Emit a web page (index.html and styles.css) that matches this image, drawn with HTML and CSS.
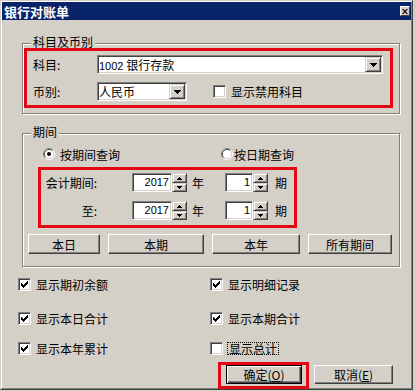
FILE: index.html
```html
<!DOCTYPE html>
<html lang="zh-CN">
<head>
    <meta charset="UTF-8">
    <title>银行对账单</title>
    <link rel="stylesheet" href="styles.css">
</head>
<body>
<div class="window">
    <div class="frame">
        <div class="titlebar">
            <span class="title">银行对账单</span>
            <span class="close">
                <svg width="6" height="5" viewBox="0 0 6 5"><path d="M0 0h1.5l1.5 1.7 1.5-1.7H6L3.8 2.5 6 5H4.5L3 3.3 1.5 5H0l2.2-2.5z" fill="#000"/></svg>
            </span>
        </div>

        <!-- 科目及币别 -->
        <div class="group group-subject">
            <div class="group-title">科目及币别</div>
            <div class="mark mark-subject">
                <div class="field-row">
                    <span class="field-label">科目:</span>
                    <div class="combo combo-wide">
                        <span class="combo-text"><span class="num">1002</span> 银行存款</span>
                        <span class="drop"><svg width="7" height="4" viewBox="0 0 7 4"><path d="M0 0H7V1H6V2H5V3H4V4H3V3H2V2H1V1H0Z"/></svg></span>
                    </div>
                </div>
                <div class="field-row field-row-next">
                    <span class="field-label">币别:</span>
                    <div class="combo combo-short">
                        <span class="combo-text">人民币</span>
                        <span class="drop"><svg width="7" height="4" viewBox="0 0 7 4"><path d="M0 0H7V1H6V2H5V3H4V4H3V3H2V2H1V1H0Z"/></svg></span>
                    </div>
                    <span class="check check-disabled"></span>
                    <span class="check-label">显示禁用科目</span>
                </div>
            </div>
        </div>

        <!-- 期间 -->
        <div class="group group-period">
            <div class="group-title">期间</div>
            <div class="radio-row">
                <span class="radio radio-first">
                    <svg width="12" height="12" viewBox="0 0 12 12">
                        <path d="M2.11 9.89A5.5 5.5 0 0 1 9.89 2.11" fill="none" stroke="#808080"/>
                        <path d="M9.89 2.11A5.5 5.5 0 0 1 2.11 9.89" fill="none" stroke="#fff"/>
                        <path d="M2.82 9.18A4.5 4.5 0 0 1 9.18 2.82" fill="none" stroke="#404040"/>
                        <path d="M9.18 2.82A4.5 4.5 0 0 1 2.82 9.18" fill="none" stroke="#d4d0c8"/>
                        <circle cx="6" cy="6" r="4" fill="#fff"/>
                        <circle cx="6" cy="6" r="2" fill="#000"/>
                    </svg>
                </span>
                <span class="radio-label">按期间查询</span>
                <span class="radio radio-second">
                    <svg width="12" height="12" viewBox="0 0 12 12">
                        <path d="M2.11 9.89A5.5 5.5 0 0 1 9.89 2.11" fill="none" stroke="#808080"/>
                        <path d="M9.89 2.11A5.5 5.5 0 0 1 2.11 9.89" fill="none" stroke="#fff"/>
                        <path d="M2.82 9.18A4.5 4.5 0 0 1 9.18 2.82" fill="none" stroke="#404040"/>
                        <path d="M9.18 2.82A4.5 4.5 0 0 1 2.82 9.18" fill="none" stroke="#d4d0c8"/>
                        <circle cx="6" cy="6" r="4" fill="#fff"/>
                    </svg>
                </span>
                <span class="radio-label radio-label-second">按日期查询</span>
            </div>

            <div class="mark mark-period">
                <div class="field-row">
                    <span class="period-label">会计期间:</span>
                    <span class="edit edit-year num">2017</span>
                    <span class="spin">
                        <span class="spin-btn spin-up"><svg width="5" height="3" viewBox="0 0 5 3"><path d="M2 0H3V1H4V2H5V3H0V2H1V1H2Z"/></svg></span>
                        <span class="spin-btn spin-down"><svg width="5" height="3" viewBox="0 0 5 3"><path d="M0 0H5V1H4V2H3V3H2V2H1V1H0Z"/></svg></span>
                    </span>
                    <span class="unit-year">年</span>
                    <span class="edit edit-period num">1</span>
                    <span class="spin">
                        <span class="spin-btn spin-up"><svg width="5" height="3" viewBox="0 0 5 3"><path d="M2 0H3V1H4V2H5V3H0V2H1V1H2Z"/></svg></span>
                        <span class="spin-btn spin-down"><svg width="5" height="3" viewBox="0 0 5 3"><path d="M0 0H5V1H4V2H3V3H2V2H1V1H0Z"/></svg></span>
                    </span>
                    <span class="unit-period">期</span>
                </div>
                <div class="field-row field-row-period">
                    <span class="period-label">至:</span>
                    <span class="edit edit-year num">2017</span>
                    <span class="spin">
                        <span class="spin-btn spin-up"><svg width="5" height="3" viewBox="0 0 5 3"><path d="M2 0H3V1H4V2H5V3H0V2H1V1H2Z"/></svg></span>
                        <span class="spin-btn spin-down"><svg width="5" height="3" viewBox="0 0 5 3"><path d="M0 0H5V1H4V2H3V3H2V2H1V1H0Z"/></svg></span>
                    </span>
                    <span class="unit-year">年</span>
                    <span class="edit edit-period num">1</span>
                    <span class="spin">
                        <span class="spin-btn spin-up"><svg width="5" height="3" viewBox="0 0 5 3"><path d="M2 0H3V1H4V2H5V3H0V2H1V1H2Z"/></svg></span>
                        <span class="spin-btn spin-down"><svg width="5" height="3" viewBox="0 0 5 3"><path d="M0 0H5V1H4V2H3V3H2V2H1V1H0Z"/></svg></span>
                    </span>
                    <span class="unit-period">期</span>
                </div>
            </div>

            <div class="quick-row">
                <span class="btn btn-day">本日</span>
                <span class="btn btn-period">本期</span>
                <span class="btn btn-year">本年</span>
                <span class="btn btn-all">所有期间</span>
            </div>
        </div>

        <!-- 显示选项 -->
        <div class="options">
            <div class="opt">
                <span class="check"><svg width="7" height="7" viewBox="0 0 7 7"><path d="M6 0h1v1h-1zM5 1h2v1h-2zM0 2h1v1h-1zM4 2h3v1h-3zM0 3h2v1h-2zM3 3h3v1h-3zM0 4h5v1h-5zM1 5h3v1h-3zM2 6h1v1h-1z"/></svg></span>
                <span class="opt-label">显示期初余额</span>
            </div>
            <div class="opt">
                <span class="check"><svg width="7" height="7" viewBox="0 0 7 7"><path d="M6 0h1v1h-1zM5 1h2v1h-2zM0 2h1v1h-1zM4 2h3v1h-3zM0 3h2v1h-2zM3 3h3v1h-3zM0 4h5v1h-5zM1 5h3v1h-3zM2 6h1v1h-1z"/></svg></span>
                <span class="opt-label">显示明细记录</span>
            </div>
            <div class="opt">
                <span class="check"><svg width="7" height="7" viewBox="0 0 7 7"><path d="M6 0h1v1h-1zM5 1h2v1h-2zM0 2h1v1h-1zM4 2h3v1h-3zM0 3h2v1h-2zM3 3h3v1h-3zM0 4h5v1h-5zM1 5h3v1h-3zM2 6h1v1h-1z"/></svg></span>
                <span class="opt-label">显示本日合计</span>
            </div>
            <div class="opt">
                <span class="check"><svg width="7" height="7" viewBox="0 0 7 7"><path d="M6 0h1v1h-1zM5 1h2v1h-2zM0 2h1v1h-1zM4 2h3v1h-3zM0 3h2v1h-2zM3 3h3v1h-3zM0 4h5v1h-5zM1 5h3v1h-3zM2 6h1v1h-1z"/></svg></span>
                <span class="opt-label">显示本期合计</span>
            </div>
            <div class="opt">
                <span class="check"><svg width="7" height="7" viewBox="0 0 7 7"><path d="M6 0h1v1h-1zM5 1h2v1h-2zM0 2h1v1h-1zM4 2h3v1h-3zM0 3h2v1h-2zM3 3h3v1h-3zM0 4h5v1h-5zM1 5h3v1h-3zM2 6h1v1h-1z"/></svg></span>
                <span class="opt-label">显示本年累计</span>
            </div>
            <div class="opt">
                <span class="check"></span>
                <span class="opt-label focus">显示总计</span>
            </div>
        </div>

        <div class="actions">
            <div class="mark mark-ok">
                <span class="btn btn-ok">确定(<u>O</u>)</span>
            </div>
            <span class="btn btn-cancel">取消(<u>E</u>)</span>
        </div>
    </div>
</div>
</body>
</html>
```

FILE: styles.css
```css
body {
    margin: 0;
    background-color: #d4d0c8;
    font-family: "Noto Sans CJK SC", sans-serif;
    font-size: 12px;
    color: #000;
}

.num {
    font-family: "Liberation Sans", sans-serif;
    font-size: 11px;
}

/* window chrome */
.window {
    width: 413px;
    height: 390px;
    box-sizing: border-box;
    border: 1px solid;
    border-color: #d4d0c8 #404040 #404040 #d4d0c8;
}
.frame {
    height: 100%;
    box-sizing: border-box;
    border: 1px solid;
    border-color: #fff #808080 #808080 #fff;
}
.titlebar {
    height: 18px;
    display: flex;
    align-items: center;
    justify-content: space-between;
    padding: 0 1px 0 2px;
    background-color: #0a246a;
    color: #fff;
    font-size: 13px;
    font-weight: bold;
}
.close {
    width: 10px;
    height: 10px;
    box-sizing: border-box;
    display: flex;
    align-items: center;
    justify-content: center;
    border: 1px solid;
    border-color: #fff #404040 #404040 #fff;
    background-color: #d4d0c8;
}

/* group boxes */
.group {
    width: 378px;
    box-sizing: border-box;
    margin-left: 20px;
    border: 1px solid #808080;
    box-shadow: inset 1px 1px 0 #fff, 1px 1px 0 #fff;
}
.group-subject {
    margin-top: 23px;
    padding-bottom: 5px;
}
.group-period {
    margin-top: 19px;
    padding-bottom: 12px;
}
.group-title {
    display: table;
    margin: -9px 0 0 8px;
    padding: 0 2px;
    line-height: 14px;
    background-color: #d4d0c8;
}

/* red marks */
.mark {
    box-sizing: border-box;
    border: 3px solid #e30613;
}
.mark-subject {
    width: 369px;
    margin: -1px 0 0 1px;
    padding: 4px 0 4px 6px;
}
.mark-period {
    width: 259px;
    margin: 6px 0 0 15px;
    padding: 3px 0 5px 4px;
}

.field-row {
    display: flex;
    align-items: center;
    height: 19px;
}
.field-row-next {
    margin-top: 8px;
}
.field-row-period {
    margin-top: 9px;
}
.field-label {
    width: 64px;
}

/* sunken fields */
.combo,
.edit,
.check {
    box-sizing: border-box;
    border: 1px solid;
    border-color: #808080 #fff #fff #808080;
    box-shadow: inset 1px 1px 0 #404040, inset -1px -1px 0 #d4d0c8;
    background-color: #fff;
}
.combo {
    display: flex;
    height: 19px;
    padding: 1px;
}
.combo-wide {
    width: 286px;
}
.combo-short {
    width: 90px;
}
.combo-text {
    flex: 1;
    line-height: 15px;
    white-space: nowrap;
    overflow: hidden;
}

/* raised parts */
.drop,
.spin-btn,
.btn {
    box-sizing: border-box;
    display: flex;
    align-items: center;
    justify-content: center;
    background-color: #d4d0c8;
}
.drop,
.spin-btn {
    border: 1px solid;
    border-color: #d4d0c8 #404040 #404040 #d4d0c8;
    box-shadow: inset 1px 1px 0 #fff, inset -1px -1px 0 #808080;
}
.drop {
    width: 16px;
    height: 15px;
}

.check {
    width: 13px;
    height: 13px;
    flex: none;
    display: flex;
    align-items: center;
    justify-content: center;
}
.check-disabled {
    margin-left: 26px;
}
.check-label {
    margin-left: 5px;
}

/* radios */
.radio-row {
    display: flex;
    align-items: center;
    height: 14px;
    margin-top: 8px;
}
.radio {
    display: flex;
    width: 12px;
    height: 12px;
}
.radio-first {
    margin-left: 20px;
}
.radio-label {
    margin-left: 5px;
}
.radio-second {
    margin-left: 101px;
}
.radio-label-second {
    margin-left: 1px;
}

/* period fields */
.period-label {
    width: 52px;
    text-align: right;
}
.edit {
    height: 19px;
    padding: 0 2px;
    line-height: 17px;
    text-align: right;
}
.edit-year {
    width: 40px;
    margin-left: 35px;
}
.edit-period {
    width: 28px;
    margin-left: 21px;
}
.spin {
    display: flex;
    flex-direction: column;
    width: 15px;
    height: 19px;
}
.spin-up {
    height: 10px;
}
.spin-down {
    height: 9px;
}
.unit-year {
    margin-left: 5px;
}
.unit-period {
    margin-left: 7px;
}

/* buttons */
.btn {
    height: 20px;
    border: 1px solid;
    border-color: #fff #404040 #404040 #fff;
    box-shadow: inset -1px -1px 0 #808080;
}
.quick-row {
    display: flex;
    gap: 8px;
    margin: 6px 0 0 5px;
}
.btn-day {
    width: 72px;
}
.btn-period {
    width: 96px;
}
.btn-year {
    width: 88px;
}
.btn-all {
    width: 84px;
}

/* options */
.options {
    display: grid;
    grid-template-columns: 192px 192px;
    grid-template-rows: 34px 30px 13px;
    margin: 11px 0 0 16px;
}
.opt {
    display: flex;
    align-items: center;
    height: 13px;
}
.opt-label {
    margin-left: 5px;
    white-space: nowrap;
}
.focus {
    box-sizing: border-box;
    height: 13px;
    margin-left: 4px;
    padding: 0 1px;
    border: 1px dotted #000;
    line-height: 11px;
}

/* dialog buttons */
.actions {
    display: flex;
    margin: 7px 0 0 216px;
}
.mark-ok {
    padding: 0 4px 2px 5px;
}
.btn-ok {
    width: 76px;
    height: 19px;
    border: 1px solid #000;
    box-shadow: inset 1px 1px 0 #fff, inset -1px -1px 0 #404040, inset -2px -2px 0 #808080;
}
.btn-cancel {
    width: 79px;
    height: 19px;
    margin: 3px 0 0 5px;
}
```
